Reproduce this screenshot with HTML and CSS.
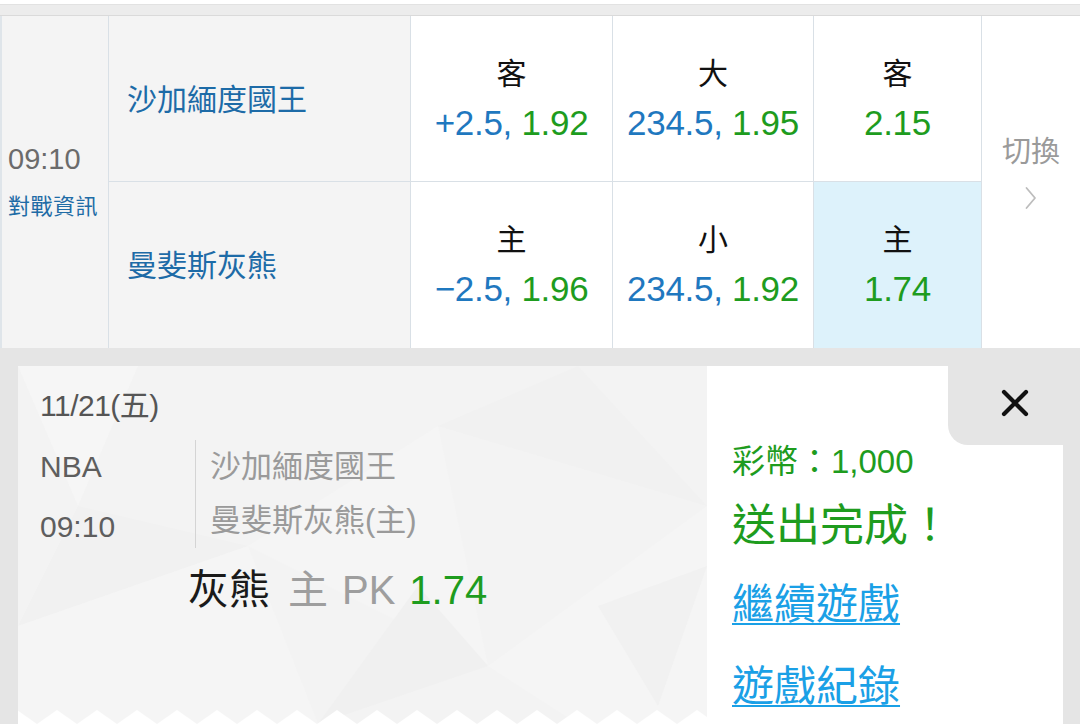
FILE: index.html
```html
<!DOCTYPE html>
<html lang="zh-Hant">
<head>
<meta charset="utf-8">
<title>投注完成</title>
<link rel="stylesheet" href="styles.css">
</head>
<body>
<div class="page">
  <div class="topbar"></div>
  <div class="strip"></div>

  <div class="board">
    <div class="cell time-cell">
      <div class="time">09:10</div>
      <div class="info-link">對戰資訊</div>
    </div>
    <div class="cell team-cell row1">沙加緬度國王</div>
    <div class="cell odds row1">
      <div class="side">客</div>
      <div class="nums"><span class="blue">+2.5,</span> <span class="green">1.92</span></div>
    </div>
    <div class="cell odds row1">
      <div class="side">大</div>
      <div class="nums"><span class="blue">234.5,</span> <span class="green">1.95</span></div>
    </div>
    <div class="cell odds row1">
      <div class="side">客</div>
      <div class="nums"><span class="green">2.15</span></div>
    </div>
    <div class="cell switch-cell">
      <div class="switch">切換</div>
      <svg class="chev" width="12" height="24" viewBox="0 0 12 24"><polyline points="1.5,2 10,12 1.5,22" fill="none" stroke="#bdbdbd" stroke-width="1.8" stroke-linecap="round" stroke-linejoin="round"/></svg>
    </div>

    <div class="cell team-cell">曼斐斯灰熊</div>
    <div class="cell odds">
      <div class="side">主</div>
      <div class="nums"><span class="blue">−2.5,</span> <span class="green">1.96</span></div>
    </div>
    <div class="cell odds">
      <div class="side">小</div>
      <div class="nums"><span class="blue">234.5,</span> <span class="green">1.92</span></div>
    </div>
    <div class="cell odds picked">
      <div class="side">主</div>
      <div class="nums"><span class="green">1.74</span></div>
    </div>
  </div>

  <div class="sheet">
    <div class="ticket">
      <svg class="pattern" width="689" height="358" viewBox="0 0 689 358" aria-hidden="true">
        <polygon points="0,0 120,0 60,140" fill="#f6f6f6"/>
        <polygon points="60,140 230,180 0,260" fill="#f1f1f1"/>
        <polygon points="230,180 420,60 470,300" fill="#f5f5f5"/>
        <polygon points="420,60 560,0 689,140" fill="#f1f1f1"/>
        <polygon points="470,300 689,140 689,358 560,358" fill="#f5f5f5"/>
        <polygon points="0,260 230,180 300,358 0,358" fill="#f5f5f5"/>
        <polygon points="300,358 470,300 400,220" fill="#f0f0f0"/>
        <polygon points="580,240 689,200 640,340" fill="#f1f1f1"/>
      </svg>
      <svg class="zigzag" width="689" height="16" viewBox="0 0 689 16" aria-hidden="true">
        <defs>
          <pattern id="teeth" x="19" y="0" width="40" height="16" patternUnits="userSpaceOnUse">
            <polygon points="0,16 20,2 40,16" fill="#ffffff"/>
          </pattern>
        </defs>
        <rect width="689" height="16" fill="url(#teeth)"/>
      </svg>
      <div class="ticket-body">
        <div class="date">11/21(五)</div>
        <div class="info">
          <div class="meta">
            <div class="meta-line">NBA</div>
            <div class="meta-line">09:10</div>
          </div>
          <div class="teams">
            <div class="team-line">沙加緬度國王</div>
            <div class="team-line">曼斐斯灰熊(主)</div>
          </div>
        </div>
        <div class="pick"><span class="pick-team">灰熊</span><span class="pick-type">主</span><span class="pick-type">PK</span><span class="green">1.74</span></div>
      </div>
    </div>
    <div class="result">
      <div class="close-tab">
        <svg width="28" height="28" viewBox="0 0 28 28"><path d="M3 3 L25 25 M25 3 L3 25" stroke="#111" stroke-width="4.2" stroke-linecap="round"/></svg>
      </div>
      <div class="coins">彩幣：1,000</div>
      <div class="done">送出完成！</div>
      <a class="link first" href="#">繼續遊戲</a>
      <a class="link" href="#">遊戲紀錄</a>
    </div>
  </div>
</div>
</body>
</html>
```

FILE: styles.css
```css
* { box-sizing: border-box; }
html, body { margin: 0; padding: 0; }
body {
  width: 1080px;
  height: 724px;
  overflow: hidden;
  background: #e5e5e5;
  font-family: "Liberation Sans", "Noto Sans CJK TC", sans-serif;
}
.page { width: 1080px; height: 724px; overflow: hidden; }

.topbar { height: 5px; background: #ffffff; border-bottom: 1px solid #e2e2e2; }
.strip { height: 11px; background: #ececec; border-bottom: 1px solid #dadada; }

.board {
  display: grid;
  grid-template-columns: 109px 302px 202px 201px 168px 1fr;
  grid-template-rows: 166px 166px;
  background: #ffffff;
}
.cell { border-right: 1px solid #d9e0e6; }
.row1 { border-bottom: 1px solid #d9e0e6; }

.time-cell {
  grid-row: 1 / span 2;
  background: #f4f4f4;
  border-left: 2px solid #dfe5ea;
  display: flex;
  flex-direction: column;
  justify-content: center;
  padding-left: 6px;
}
.time { font-size: 29px; line-height: 34px; color: #6b6b6b; }
.info-link { font-size: 22px; line-height: 30px; color: #1f6ca6; margin-top: 16px; letter-spacing: 0.5px; }

.team-cell {
  background: #f4f4f4;
  display: flex;
  align-items: center;
  padding-left: 18px;
  padding-bottom: 4px;
  font-size: 30px;
  color: #1d6ba7;
}

.odds {
  display: flex;
  flex-direction: column;
  align-items: center;
  justify-content: center;
  text-align: center;
}
.odds.picked { background: #ddf2fb; }
.side { font-size: 30px; line-height: 48px; color: #111111; }
.nums { font-size: 35px; line-height: 50px; white-space: nowrap; letter-spacing: -0.3px; }
.blue { color: #1f78bf; }
.green { color: #1e9c1e; }

.switch-cell {
  grid-column: 6;
  grid-row: 1 / span 2;
  border-right: none;
  display: flex;
  flex-direction: column;
  align-items: center;
  justify-content: center;
  padding-bottom: 20px;
  padding-left: 0;
}
.switch { font-size: 29px; line-height: 36px; color: #9a9a9a; }
.chev { margin-top: 16px; }

.sheet {
  display: flex;
  height: 358px;
  margin: 18px 17px 0 18px;
}
.ticket {
  flex: 0 0 689px;
  position: relative;
  background: #f3f3f3;
  overflow: hidden;
}
.pattern { position: absolute; left: 0; top: 0; }
.zigzag { position: absolute; left: 0; bottom: 0; }
.ticket-body { position: relative; padding: 20px 0 0 22px; }
.date { font-size: 30px; line-height: 40px; color: #555555; letter-spacing: -0.5px; }
.info { display: flex; align-items: flex-start; margin-top: 14px; }
.meta { width: 155px; display: flex; flex-direction: column; gap: 6px; }
.meta-line { font-size: 30px; line-height: 54px; color: #5e5e5e; }
.teams { border-left: 1px solid #d4d4d4; padding-left: 14px; height: 108px; }
.team-line { font-size: 31px; line-height: 54px; color: #9a9a9a; }
.pick { margin-top: 12px; padding-left: 148px; font-size: 40px; line-height: 48px; white-space: nowrap; display: flex; gap: 14px; align-items: baseline; }
.pick-team { color: #1a1a1a; font-size: 41px; margin-right: 4px; }
.pick-type { color: #9e9e9e; }

.result {
  flex: 1;
  position: relative;
  background: #ffffff;
  padding: 76px 0 0 25px;
}
.close-tab {
  position: absolute;
  top: 0;
  right: 0;
  width: 115px;
  height: 79px;
  background: #e5e5e5;
  border-bottom-left-radius: 20px;
  display: flex;
  align-items: center;
  justify-content: center;
  padding-left: 18px;
  padding-bottom: 5px;
}
.coins { font-size: 33px; line-height: 40px; color: #1e9c1e; }
.done { font-size: 44px; line-height: 52px; color: #1e9c1e; margin-top: 18px; }
.link {
  display: block;
  font-size: 42px;
  line-height: 50px;
  color: #1aa0e6;
  text-decoration: underline;
  text-decoration-thickness: 2px;
  text-underline-offset: 4px;
  margin-top: 32px;
  width: max-content;
}
.link.first { margin-top: 28px; }
```
